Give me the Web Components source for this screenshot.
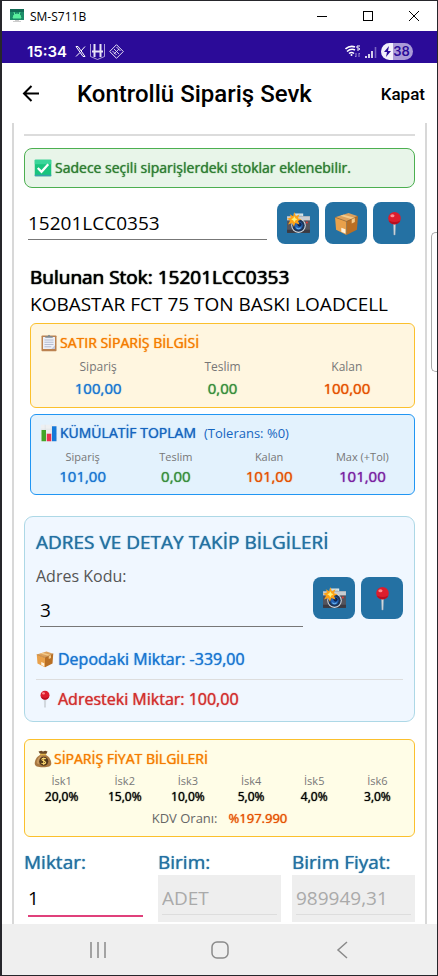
<!DOCTYPE html>
<html lang="tr">
<head>
<meta charset="utf-8">
<meta name="viewport" content="width=device-width, initial-scale=1">
<title>Kontrollü Sipariş Sevk</title>
<style>
  html, body { height: 100%; }
  body {
    margin: 0;
    font-family: "Open Sans", "Noto Sans", sans-serif;
    color: #000;
    --blue: #2471a3;
    --medium: 0 0 1px; /* text-shadow, yarı kalın yazılar için */
  }
  .info { margin-left: 6px; }
  .stok { margin: 20px 0 5px 6px; font-size: 19px; line-height: 27px; }
  .stok strong { font-weight: 500; text-shadow: 0 0 1px, 0 0 1px; }
  .row { display: flex; align-items: center; gap: 6px; }
  .row form-field { flex: 1; }
  .fields { display: grid; grid-template-columns: repeat(3, 1fr); align-items: start; gap: 11px; margin-top: 13px; }
  hr { border: 0; border-top: 2px solid #dcdcdc; margin: 0 0 12px; }
  .entry-row { margin-top: 14px; }
  .cumulative { margin-top: 6px; }
  .address { margin-top: 21px; }
  .price { margin-top: 17px; }
  .kdv { display: flex; justify-content: center; gap: 11px; margin-top: 3px; font-size: 13px; line-height: 20px; color: #666; }
  .kdv b { font-weight: 500; color: #e65100; text-shadow: var(--medium); }
</style>
</head>
<body>

<phone-window>
  <window-bar slot="top" name="SM-S711B"></window-bar>
  <status-bar slot="top" time="15:34" battery="38"></status-bar>
  <app-header slot="top" name="Kontrollü Sipariş Sevk" action="Kapat"></app-header>

  <hr>
  <notice-box>Sadece seçili siparişlerdeki stoklar eklenebilir.</notice-box>

  <div class="row entry-row">
    <form-field name="Stok kodu" value="15201LCC0353"></form-field>
    <icon-button icon="camera" name="Kamera"></icon-button>
    <icon-button icon="box" name="Stok"></icon-button>
    <icon-button icon="pin" name="Adres"></icon-button>
  </div>

  <div class="stok">
    <strong>Bulunan Stok: 15201LCC0353</strong><br>
    KOBASTAR FCT 75 TON BASKI LOADCELL
  </div>

  <info-panel class="info" icon="clipboard" tone="amber">
    <span slot="title">SATIR SİPARİŞ BİLGİSİ</span>
    <stat-cell label="Sipariş" color="#1976d2">100,00</stat-cell>
    <stat-cell label="Teslim" color="#388e3c">0,00</stat-cell>
    <stat-cell label="Kalan" color="#e65100">100,00</stat-cell>
  </info-panel>

  <info-panel class="info cumulative" icon="chart" tone="blue">
    <span slot="title">KÜMÜLATİF TOPLAM</span>
    <span slot="note">(Tolerans: %0)</span>
    <stat-cell size="medium" label="Sipariş" color="#1976d2">101,00</stat-cell>
    <stat-cell size="medium" label="Teslim" color="#388e3c">0,00</stat-cell>
    <stat-cell size="medium" label="Kalan" color="#e65100">101,00</stat-cell>
    <stat-cell size="medium" label="Max (+Tol)" color="#7b1fa2">101,00</stat-cell>
  </info-panel>

  <address-card class="address" name="ADRES VE DETAY TAKİP BİLGİLERİ">
    <div class="row">
      <form-field label="Adres Kodu:" value="3"></form-field>
      <icon-button icon="camera" name="Kamera"></icon-button>
      <icon-button icon="pin" name="Adres"></icon-button>
    </div>
    <amount-line slot="amounts" icon="box" color="#1976d2">Depodaki Miktar: -339,00</amount-line>
    <amount-line slot="amounts" icon="pin" color="#d32f2f">Adresteki Miktar: 100,00</amount-line>
  </address-card>

  <info-panel class="price" icon="money" tone="yellow">
    <span slot="title">SİPARİŞ FİYAT BİLGİLERİ</span>
    <stat-cell size="small" label="İsk1">20,0%</stat-cell>
    <stat-cell size="small" label="İsk2">15,0%</stat-cell>
    <stat-cell size="small" label="İsk3">10,0%</stat-cell>
    <stat-cell size="small" label="İsk4">5,0%</stat-cell>
    <stat-cell size="small" label="İsk5">4,0%</stat-cell>
    <stat-cell size="small" label="İsk6">3,0%</stat-cell>
    <div slot="footer" class="kdv"><span>KDV Oranı:</span><b>%197.990</b></div>
  </info-panel>

  <div class="fields">
    <form-field big focused label="Miktar:" value="1"></form-field>
    <form-field big disabled label="Birim:" value="ADET"></form-field>
    <form-field big disabled label="Birim Fiyat:" value="989949,31"></form-field>
  </div>

  <nav-bar slot="bottom"></nav-bar>
</phone-window>

<script>
const ICONS = {
  check: `
    <rect x="1" y="1" width="22" height="22" rx="1" fill="#19c47e"/>
    <path d="M1 1h22v6H1z" fill="#3ad69a"/><path d="M1 21h22v2H1z" fill="#3c9dae"/>
    <path d="M5 12l5 5 9-10" fill="none" stroke="#fff" stroke-width="3"/>`,
  camera: `
    <path d="M8 5V3h8v2" fill="#b9d3da" stroke="#dfe9ec"/>
    <rect x="1" y="5" width="22" height="16" rx="1" fill="#54545c"/>
    <path d="M1 5h22v4H1z" fill="#c8cdd2"/><path d="M1 18h22v3H1z" fill="#3b3a42"/>
    <circle cx="12" cy="14" r="7" fill="#d3dae0"/><circle cx="12" cy="14" r="6" fill="#1d3557"/>
    <circle cx="12" cy="14" r="4" fill="#2463b5"/><circle cx="13" cy="13" r="2" fill="#0d2550"/>
    <path d="M10 16q2 2 4 0" stroke="#6db5ec" fill="none"/>
    <circle cx="20" cy="11" r="1" fill="#e53935"/>
    <path d="M8 1l1.500 4L13 3l-1.500 4L15 8l-3.500 1.500L13 13l-4-1.500L7.500 15 6 11.500 2 13l2-4-3-1.500L5 6 3.500 3 7 5z" fill="#ffa216"/>
    <path d="M8 5l1 2 2 1-2 1-1 2-1-2-2-1 2-1z" fill="#fff176"/>`,
  box: `
    <path d="M1 6l13-4 9 3-11 5z" fill="#dca15c"/>
    <path d="M1 6l11 4v13L2 18z" fill="#e9a14b"/>
    <path d="M12 10l11-5-1 13-10 5z" fill="#b96f24"/>
    <path d="M6 4.500l11 3.500v4l3-1.500V6.500L9 3.500z" fill="#f4cb8b"/>
    <path d="M1 6l11 4 11-5" fill="none" stroke="#9d6227" stroke-width=".6"/>
    <path d="M7 16l4 1.500v4L7 20z" fill="#fff2dc"/>`,
  pin: `
    <path d="M11 11h2l-.4 12h-1.200z" fill="#d7dde2" stroke="#a5adb4" stroke-width=".4"/>
    <circle cx="12" cy="7" r="6" fill="#dc1d2c"/>
    <path d="M6.500 9a6 6 0 0 0 11 0q-5 3-11 0z" fill="#b40f20"/>
    <ellipse cx="10" cy="4.500" rx="2" ry="1.500" fill="#ff8d91"/>`,
  clipboard: `
    <rect x="2" y="2" width="20" height="21" rx="1" fill="#bc8250"/>
    <path d="M4 4h16v16H4z" fill="#eceff7"/>
    <path d="M6 8h12M6 11h12M6 14h12M6 17h9" stroke="#a5acc4"/>
    <path d="M7 5V3h3q2-4 4 0h3v2z" fill="#808b91"/>
    <path d="M15 20l5-5v5z" fill="#c2c8dc"/>`,
  chart: `
    <rect x="1" y="1" width="22" height="22" fill="#eef0f2"/>
    <path d="M1 7h22M1 13h22M1 19h22M7 1v22M15 1v22" stroke="#d5dadd" stroke-width=".6"/>
    <path d="M2 8h6v15H2z" fill="#43a528"/><path d="M9 13h6v10H9z" fill="#e8314f"/>
    <path d="M16 3h6v20h-6z" fill="#1679d8"/>`,
  money: `
    <path d="M8 5L6 2l4-1 2 1 3-1 3 1-2 4z" fill="#6e4b26"/>
    <path d="M9 6C3 9 1 14 1 18c0 4 4 5 11 5s11-1 11-5c0-4-2-9-8-12z" fill="#a87842"/>
    <path d="M4 14C6 9 9 7 11 7c-3 3-4 7-4 12-3 0-4-2-3-5z" fill="#c99a60"/>
    <path d="M8 6h8" stroke="#e0b54d" stroke-width="2"/>
    <circle cx="13" cy="15" r="6" fill="#53391c"/>
    <path d="M16 12c-1-1-5-1.500-5.500.5C10 15 16 14.500 15.500 17c-.5 2-4.500 1.500-5.500.5M13 10v10" fill="none" stroke="#ffdb70" stroke-width="1.400"/>`
};

// kısa yol: shadow root + şablon
class BaseElement extends HTMLElement {
  constructor() {
    super();
    this.attachShadow({ mode: 'open' });
  }
  connectedCallback() {
    this.shadowRoot.innerHTML = this.render();
  }
  attr(name) {
    return this.getAttribute(name) || '';
  }
}

class PhoneWindow extends BaseElement {
  render() {
    return `
    <style>
      :host {
        display: flex; flex-direction: column; position: relative;
        box-sizing: border-box; height: 100vh; overflow: hidden;
        border: 1px solid #26262b; border-left-width: 2px; background: #fff;
      }
      main {
        flex: 1; min-height: 0; overflow: hidden; box-sizing: border-box;
        margin: 0 10px; padding: 11px 10px 0;
        border: solid #d8d8d8; border-width: 0 2px;
      }
      .edge {
        position: absolute; right: 0; top: 231px; width: 5px; height: 138px;
        border: 1px solid #aaa; border-right: 0; border-radius: 5px 0 0 5px; background: #fff;
      }
    </style>
    <slot name="top"></slot>
    <main><slot></slot></main>
    <slot name="bottom"></slot>
    <div class="edge"></div>`;
  }
}
customElements.define('phone-window', PhoneWindow);

class WindowBar extends BaseElement {
  render() {
    return `
    <style>
      :host { display: flex; align-items: center; height: 30px; padding-left: 8px; font-size: 12px; }
      span { flex: 1; padding-left: 6px; }
      button { width: 46px; height: 30px; padding: 0; border: 0; background: none; }
      button svg { display: block; margin: auto; }
    </style>
    <svg width="14" height="14" viewBox="0 0 14 14">
      <rect width="14" height="11" fill="#1b8c68"/><path d="M0 0h14v3H0z" fill="#126b56"/>
      <path d="M3 9a4 4 0 0 1 8 0zM4 3l1 3M10 3L9 6" fill="#5af09f" stroke="#5af09f"/>
      <path d="M5 11h4v1h2v1H3v-1h2z" fill="#ccc"/>
    </svg>
    <span>${this.attr('name')}</span>
    <button aria-label="Simge durumuna küçült"><svg width="10" height="10"><path d="M0 5.500h10" stroke="#000"/></svg></button>
    <button aria-label="Ekranı kapla"><svg width="10" height="10"><rect x=".5" y=".5" width="9" height="9" fill="none" stroke="#000"/></svg></button>
    <button aria-label="Pencereyi kapat"><svg width="10" height="10"><path d="M0 0l10 10M10 0L0 10" stroke="#000"/></svg></button>`;
  }
}
customElements.define('window-bar', WindowBar);

class StatusBar extends BaseElement {
  render() {
    return `
    <style>
      :host {
        display: flex; align-items: center; gap: 4px; box-sizing: border-box; height: 32px;
        padding: 9px 24px 0 25px; background: #2b0b98; color: #fff; font-family: Inter, sans-serif;
      }
      time { font-size: 15px; font-weight: 600; line-height: 22px; margin-right: 4px; }
      .gap { flex: 1; }
      .battery {
        display: flex; align-items: center; justify-content: center; gap: 2px; width: 32px; height: 17px; border-radius: 9px;
        background: linear-gradient(90deg, #f3f0fb 38%, #aa9bd8 38%);
        color: #2b0b98; font-size: 13px; font-weight: 600; line-height: 17px;
      }
    </style>
    <time>${this.attr('time')}</time>
    <svg width="11" height="11" viewBox="0 0 11 11" fill="none" stroke="#fff"><path d="M1 .5h2l7 10H8zM10 .5L6 5M5 6.500L1 10.500"/></svg>
    <svg width="15" height="16" viewBox="0 0 15 16" fill="none" stroke="#e8e4f6">
      <path d="M.5 0v12.500l7 3 7-3V0" stroke-width=".7"/><path d="M4.500 0v13M10.500 0v13" stroke-width="2"/><path d="M2 7.500h11" stroke-width="2"/>
    </svg>
    <svg width="15" height="15" viewBox="0 0 15 15" fill="none" stroke="#e8e4f6">
      <path d="M7.500 .7l6.800 6.800-6.800 6.800L.7 7.500z"/><path d="M5 5l5 5M7.500 3l4 4M3.500 7l4 4M10 5l-5 5" stroke-width=".9"/>
    </svg>
    <span class="gap"></span>
    <svg width="16" height="13" viewBox="0 0 16 13" fill="none" stroke="#fff">
      <path d="M.5 4Q5 0 10 2M2 6.500Q6 3 10 5M4 8.500q2.500-2 5 0" stroke-width="1.600"/><circle cx="6.500" cy="10" r="1" fill="#fff" stroke="none"/>
      <path d="M15 1h-3v2h2q1 1 0 2h-2" /><path d="M11 8v4l-1-1M14 12V8l1 1" stroke="#9c8bd2"/>
    </svg>
    <svg width="12" height="12" viewBox="0 0 12 12" stroke="#fff" stroke-width="1.600">
      <path d="M1 10v2M4 8v4M7 5v7"/><path d="M10.500 1v11" stroke="#7865c2"/>
    </svg>
    <div class="battery">
      <svg width="7" height="11" viewBox="0 0 7 11"><path d="M5 0L0 6h3L2 11l5-6H4z" fill="#2b0b98"/></svg>${this.attr('battery')}
    </div>`;
  }
}
customElements.define('status-bar', StatusBar);

class AppHeader extends BaseElement {
  render() {
    return `
    <style>
      :host { display: flex; align-items: center; box-sizing: border-box; height: 60px; padding: 2px 12px 0 20px; font-family: Roboto, sans-serif; }
      button { padding: 0; border: 0; background: none; font: inherit; color: inherit; }
      button svg { display: block; }
      h1 { flex: 1; margin: 0 0 0 37px; font-size: 24px; font-weight: 500; line-height: 32px; white-space: nowrap; }
      .action { font-size: 17px; font-weight: 500; line-height: 24px; }
    </style>
    <button aria-label="Geri"><svg width="18" height="18" viewBox="0 0 18 18" fill="none" stroke="#000" stroke-width="2"><path d="M17 8.500H2M9.500 1L2 8.500 9.500 16"/></svg></button>
    <h1>${this.attr('name')}</h1>
    <button class="action">${this.attr('action')}</button>`;
  }
}
customElements.define('app-header', AppHeader);

class EmojiIcon extends BaseElement {
  render() {
    const size = this.attr('size') || 18;
    return `
    <style>:host { display: block; flex: none; } svg { display: block; }</style>
    <svg width="${size}" height="${size}" viewBox="0 0 24 24" aria-hidden="true">${ICONS[this.attr('icon')]}</svg>`;
  }
}
customElements.define('emoji-icon', EmojiIcon);

class NoticeBox extends BaseElement {
  render() {
    return `
    <style>
      :host {
        display: flex; align-items: center; gap: 3px; padding: 8px 9px;
        border: 1px solid #4caf50; border-radius: 8px; background: #e8f5e9;
        color: #2e7d32; font-size: 14px; font-weight: 500; line-height: 22px; text-shadow: var(--medium);
      }
    </style>
    <emoji-icon icon="check"></emoji-icon><span><slot></slot></span>`;
  }
}
customElements.define('notice-box', NoticeBox);

class IconButton extends BaseElement {
  render() {
    return `
    <style>
      :host { display: block; flex: none; }
      button {
        display: grid; place-items: center; width: 42px; height: 42px; padding: 0;
        border: 0; border-radius: 8px; background: var(--blue);
      }
    </style>
    <button aria-label="${this.attr('name')}"><emoji-icon icon="${this.attr('icon')}" size="25"></emoji-icon></button>`;
  }
}
customElements.define('icon-button', IconButton);

class FormField extends BaseElement {
  render() {
    const label = this.attr('label');
    return `
    <style>
      :host { display: block; min-width: 0; }
      label { display: block; margin-bottom: 2px; color: #555; font-size: 16px; line-height: 22px; }
      .entry { box-sizing: border-box; height: 42px; padding: 0 4px 4px; }
      input {
        display: block; box-sizing: border-box; width: 100%; height: 100%; padding: 4px 0 0;
        border: 0; border-bottom: 1px solid #777; border-radius: 0; outline: 0;
        background: none; color: #000; font: inherit; font-size: 19px;
      }
      :host([big]) label { margin: 0; color: var(--blue); font-size: 19px; font-weight: 500; line-height: 25px; text-shadow: var(--medium); }
      :host([big]) .entry { height: 47px; padding-bottom: 5px; }
      :host([big]) input { padding-top: 6px; }
      :host([focused]) input { border-bottom: 2px solid #e0407b; }
      :host([disabled]) .entry { padding-bottom: 7px; background: #eee; }
      :host([disabled]) input { border-color: #ddd; color: #aaa; }
    </style>
    ${label ? `<label for="f">${label}</label>` : ''}
    <div class="entry">
      <input id="f" type="text" value="${this.attr('value')}" ${label ? '' : `aria-label="${this.attr('name')}"`} ${this.hasAttribute('disabled') ? 'disabled' : ''}>
    </div>`;
  }
}
customElements.define('form-field', FormField);

class InfoPanel extends BaseElement {
  render() {
    return `
    <style>
      :host { display: block; padding: 9px 5px 8px; border: 1px solid; border-radius: 6px; }
      :host([tone="amber"]) { border-color: #fbc02d; background: #fff6e0; --title: #f57c00; }
      :host([tone="blue"]) { padding-top: 8px; border-color: #2196f3; background: #e3f2fd; --title: #1565c0; }
      :host([tone="yellow"]) { border-color: #fbc02d; background: #fffde7; --title: #f57c00; }
      header {
        display: flex; align-items: center; gap: 2px; padding: 0 4px; margin-bottom: 4px;
        color: var(--title); font-size: 14px; font-weight: 500; line-height: 20px; text-shadow: var(--medium);
      }
      .note { font-size: 13px; font-weight: 400; margin-left: 6px; text-shadow: none; }
      .cells { display: grid; grid-auto-flow: column; grid-auto-columns: minmax(0, 1fr); }
    </style>
    <header>
      <emoji-icon icon="${this.attr('icon')}"></emoji-icon>
      <slot name="title"></slot>
      <span class="note"><slot name="note"></slot></span>
    </header>
    <div class="cells"><slot></slot></div>
    <slot name="footer"></slot>`;
  }
}
customElements.define('info-panel', InfoPanel);

class StatCell extends BaseElement {
  render() {
    return `
    <style>
      :host { display: block; text-align: center; }
      div { color: #777; font-size: 12px; line-height: 20px; }
      b { display: block; color: ${this.attr('color') || '#000'}; font-size: 15px; font-weight: 500; line-height: 22px; text-shadow: var(--medium); }
      :host([size="medium"]) div { font-size: 11px; line-height: 19px; }
      :host([size="medium"]) b { font-size: 15px; line-height: 20px; }
      :host([size="small"]) div { font-size: 11px; line-height: 16px; }
      :host([size="small"]) b { font-size: 12px; line-height: 16px; }
    </style>
    <div>${this.attr('label')}</div>
    <b><slot></slot></b>`;
  }
}
customElements.define('stat-cell', StatCell);

class AddressCard extends BaseElement {
  render() {
    return `
    <style>
      :host { display: block; padding: 11px; border: 1px solid #add8e6; border-radius: 9px; background: #f0f7ff; }
      h2 { margin: 0 0 9px; color: var(--blue); font-size: 19px; font-weight: 500; line-height: 28px; text-shadow: var(--medium); }
      .amounts { margin-top: 9px; }
      ::slotted(amount-line:not(:last-child)) { border-bottom: 1px solid #ddd; }
    </style>
    <h2>${this.attr('name')}</h2>
    <slot></slot>
    <div class="amounts"><slot name="amounts"></slot></div>`;
  }
}
customElements.define('address-card', AddressCard);

class AmountLine extends BaseElement {
  render() {
    return `
    <style>
      :host {
        display: flex; align-items: center; gap: 4px; padding: 8px 0 9px;
        font-size: 16px; font-weight: 500; line-height: 22px; color: ${this.attr('color')}; text-shadow: var(--medium);
      }
      :host(:last-child) { padding-bottom: 0; }
    </style>
    <emoji-icon icon="${this.attr('icon')}"></emoji-icon><span><slot></slot></span>`;
  }
}
customElements.define('amount-line', AmountLine);

class NavBar extends BaseElement {
  render() {
    return `
    <style>
      :host { display: flex; justify-content: center; gap: 76px; align-items: center; height: 51px; background: #efefef; }
      button { width: 46px; height: 40px; padding: 0; border: 0; background: none; }
      svg { display: block; margin: auto; }
    </style>
    <button aria-label="Son uygulamalar"><svg width="18" height="18" fill="none" stroke="#8a8a8a" stroke-width="1.500"><path d="M2 1v16M9 1v16M16 1v16"/></svg></button>
    <button aria-label="Ana ekran"><svg width="18" height="18" fill="none" stroke="#8a8a8a" stroke-width="1.500"><rect x="1" y="1" width="16" height="16" rx="5"/></svg></button>
    <button aria-label="Geri"><svg width="18" height="18" fill="none" stroke="#8a8a8a" stroke-width="1.500"><path d="M14 1L5 9l9 8"/></svg></button>`;
  }
}
customElements.define('nav-bar', NavBar);
</script>
</body>
</html>
